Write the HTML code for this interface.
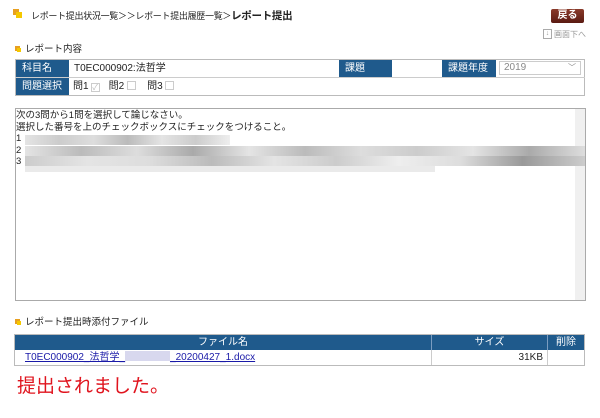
<!DOCTYPE html>
<html><head><meta charset="utf-8"><style>
*{margin:0;padding:0;box-sizing:border-box}
body{width:600px;height:418px;background:#fff;font-family:"Liberation Sans","Noto Sans CJK JP",sans-serif;font-size:10px;color:#222;position:relative;overflow:hidden}
.a{position:absolute}
.lbl{background:#1f5a8c;color:#fff;padding-left:6px;line-height:17px}
.bl{background:#ccc}
</style></head><body>
<div class="a" style="left:13px;top:9px;width:6px;height:6px;background:#e8a020"></div>
<div class="a" style="left:16px;top:12px;width:6px;height:6px;background:#f5c800"></div>
<div class="a" style="left:31px;top:9px;font-size:9px;line-height:14px;letter-spacing:-0.3px">レポート提出状況一覧＞＞レポート提出履歴一覧＞<b style="font-size:10.5px">レポート提出</b></div>
<div class="a" style="left:551px;top:9px;width:33px;height:14px;background:linear-gradient(#8a3a2a,#5a1a12);border-radius:2px;color:#fff;font-size:10px;line-height:14px;text-align:center;font-weight:bold">戻る</div>
<div class="a" style="left:543px;top:29px;width:9px;height:10px;border:1px solid #aaa;font-size:7px;color:#999;line-height:8px;text-align:center">↓</div>
<div class="a" style="left:554px;top:29px;font-size:8px;color:#999;line-height:11px">画面下へ</div>
<div class="a" style="left:15px;top:46px;width:5px;height:5px;background:#e8a020"></div>
<div class="a" style="left:17px;top:48px;width:4px;height:4px;background:#f5c800"></div>
<div class="a" style="left:25px;top:44px;line-height:12px;font-size:9.5px">レポート内容</div>
<div class="a" style="left:15px;top:59px;width:570px;height:37px;border:1px solid #bbb"></div>
<div class="a" style="left:15px;top:77px;width:570px;height:1px;background:#ccc"></div>
<div class="a lbl" style="left:16px;top:60px;width:53px;height:17px">科目名</div>
<div class="a lbl" style="left:16px;top:78px;width:53px;height:17px">問題選択</div>
<div class="a" style="left:74px;top:60px;line-height:17px">T0EC000902:法哲学</div>
<div class="a lbl" style="left:339px;top:60px;width:53px;height:17px">課題</div>
<div class="a lbl" style="left:442px;top:60px;width:54px;height:17px">課題年度</div>
<div class="a" style="left:499px;top:61px;width:82px;height:14px;border:1px solid #ccc;color:#888;line-height:12px;padding-left:4px">2019<span style="position:absolute;right:4px;top:0;font-size:8px">﹀</span></div>
<div class="a" style="left:73px;top:78px;line-height:17px">問1 <span style="display:inline-block;width:9px;height:9px;border:1px solid #ccc;vertical-align:-1px;font-size:8px;color:#bbb;line-height:7px">✓</span>&nbsp;&nbsp;&nbsp;問2 <span style="display:inline-block;width:9px;height:9px;border:1px solid #ccc;vertical-align:-1px"></span>&nbsp;&nbsp;&nbsp;&nbsp;問3 <span style="display:inline-block;width:9px;height:9px;border:1px solid #ccc;vertical-align:-1px"></span></div>
<div class="a" style="left:15px;top:108px;width:571px;height:193px;border:1px solid #aaa"></div>
<div class="a" style="left:575px;top:109px;width:10px;height:191px;background:#f0f0f0"></div>
<div class="a" style="left:16px;top:110px;line-height:11.5px;font-size:9.5px">次の3問から1問を選択して論じなさい。<br>選択した番号を上のチェックボックスにチェックをつけること。<br>1<br>2<br>3</div>
<div class="a bl" style="left:25px;top:135px;width:205px;height:10px;background:linear-gradient(90deg,#e4e4e4,#ccc,#ddd,#bbb,#e4e4e4,#ccc,#eee)"></div>
<div class="a bl" style="left:25px;top:146px;width:560px;height:10px;background:linear-gradient(90deg,#e4e4e4,#bbb,#ddd,#aaa,#e4e4e4,#bbb,#ddd,#ccc,#e4e4e4,#aaa,#ddd)"></div>
<div class="a bl" style="left:25px;top:156px;width:560px;height:10px;background:linear-gradient(90deg,#ccc,#e4e4e4,#ddd,#bbb,#e4e4e4,#ccc,#eee,#ddd,#999,#ccc)"></div>
<div class="a bl" style="left:25px;top:166px;width:410px;height:6px;background:#eaeaea"></div>
<div class="a" style="left:15px;top:319px;width:5px;height:5px;background:#e8a020"></div>
<div class="a" style="left:17px;top:321px;width:4px;height:4px;background:#f5c800"></div>
<div class="a" style="left:25px;top:317px;line-height:12px;font-size:9.5px">レポート提出時添付ファイル</div>
<div class="a" style="left:14px;top:334px;width:571px;height:32px;border:1px solid #bbb"></div>
<div class="a" style="left:15px;top:335px;width:569px;height:15px;background:#1f5a8c;color:#fff;line-height:15px"><span class="a" style="left:0;width:416px;text-align:center">ファイル名</span><span class="a" style="left:416px;width:116px;text-align:center;border-left:1px solid #7a9cc0">サイズ</span><span class="a" style="left:532px;width:37px;text-align:center;border-left:1px solid #7a9cc0">削除</span></div>
<div class="a" style="left:431px;top:350px;width:1px;height:15px;background:#ccc"></div>
<div class="a" style="left:547px;top:350px;width:1px;height:15px;background:#ccc"></div>
<div class="a" style="left:25px;top:350px;line-height:15px;color:#1a1aa8;text-decoration:underline">T0EC000902_法哲学_<span style="display:inline-block;width:45px;height:10px;background:#d8d8ee;vertical-align:-1px"></span>_20200427_1.docx</div>
<div class="a" style="left:440px;top:350px;width:103px;text-align:right;line-height:15px">31KB</div>
<div class="a" style="left:17px;top:374px;font-size:19px;color:#e0141e;line-height:26px">提出されました。</div>
</body></html>
